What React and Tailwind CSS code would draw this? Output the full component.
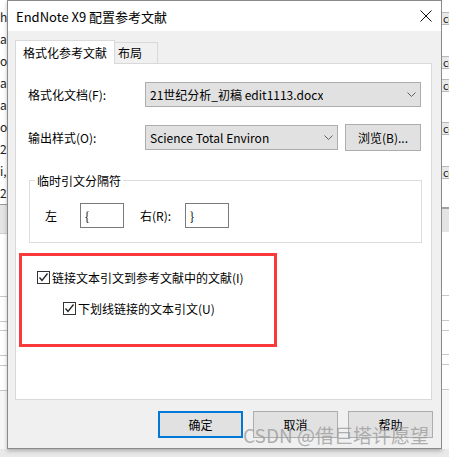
import React from "react";

const font = "font-['Noto_Sans_CJK_SC','Noto_Sans',sans-serif]";

function Chevron() {
  return (
    <svg width="9" height="6" viewBox="0 0 9 6" className="shrink-0">
      <polyline points="0.5,0.5 4.5,4.5 8.5,0.5" fill="none" stroke="#606060" strokeWidth="1" />
    </svg>
  );
}

function Check() {
  return (
    <span className="w-[13px] h-[13px] border border-[#333] bg-white flex items-center justify-center shrink-0">
      <svg width="11" height="11" viewBox="0 0 11 11">
        <polyline points="1.5,5.5 4,8.5 9.5,1.5" fill="none" stroke="#222" strokeWidth="1.3" />
      </svg>
    </span>
  );
}

function Select({ width, children }) {
  return (
    <div className={`${width} h-[25px] bg-[#e1e1e1] border border-[#adadad] flex items-center justify-between pl-[4px] pr-[4px]`}>
      <span className="truncate">{children}</span>
      <Chevron />
    </div>
  );
}

const leftText = ["ha", "al.", "os", "ar", "al.", "os", "23", "i,", "2"];
const rightRows = [12, 56, 79, 122, 166];

function LeftStrip() {
  return (
    <div className="w-[7px] h-full bg-white flex flex-col overflow-hidden text-[12px] leading-[22px] text-[#222]">
      <div className="h-[6px]" />
      {leftText.map((t, i) => (
        <div key={i} className="h-[22px] whitespace-nowrap">{t}</div>
      ))}
      <div className="h-[1px] bg-[#9a9a9a]" />
      <div className="h-[29px] bg-[#e4e4e4] border-b border-[#cfcfcf]" />
      <div className="h-[62px]" />
      <div className="h-[1px] bg-[#c8c8c8]" />
      <div className="h-[24px]" />
      <div className="h-[1px] bg-[#c8c8c8]" />
      <div className="h-[8px]" />
      <div className="h-[1px] bg-[#c8c8c8]" />
      <div className="h-[24px]" />
      <div className="h-[1px] bg-[#c8c8c8]" />
      <div className="h-[9px]" />
      <div className="h-[1px] bg-[#c8c8c8]" />
      <div className="h-[24px]" />
      <div className="h-[1px] bg-[#c8c8c8]" />
      <div className="flex-1 bg-[#f7f7f7]" />
    </div>
  );
}

function RightStrip() {
  const items = [];
  let y = 0;
  rightRows.forEach((top, i) => {
    items.push(<div key={"s" + i} style={{ height: top - y }} />);
    items.push(
      <div key={"c" + i} className="h-[13px] bg-[#e9e9e9] border-y border-[#b9b9b9] text-[11px] leading-[11px] whitespace-nowrap pl-[1px]">
        ce
      </div>
    );
    y = top + 13;
  });
  return (
    <div className="w-[7px] h-full bg-white flex flex-col overflow-hidden text-[#222]">
      {items}
      <div className="h-[28px]" />
      <div className="h-[2px] bg-[#a0a0a0]" />
      <div className="h-[23px] bg-[#e4e4e4]" />
      <div className="h-[63px]" />
      <div className="h-[1px] bg-[#c8c8c8]" />
      <div className="h-[24px]" />
      <div className="h-[1px] bg-[#c8c8c8]" />
      <div className="h-[9px]" />
      <div className="h-[1px] bg-[#c8c8c8]" />
      <div className="h-[23px]" />
      <div className="h-[1px] bg-[#c8c8c8]" />
      <div className="h-[9px]" />
      <div className="h-[1px] bg-[#c8c8c8]" />
      <div className="h-[24px]" />
      <div className="h-[1px] bg-[#c8c8c8]" />
      <div className="flex-1 bg-[#f7f7f7]" />
    </div>
  );
}

export default function App() {
  return (
    <div className={`${font} w-[449px] h-[457px] relative overflow-hidden bg-[#e9e9e9] text-[12px] text-black`}>
      <div className="flex h-[449px]">
        <LeftStrip />

        {/* Dialog */}
        <div className="w-[435px] h-full border border-[#8a8a8a] bg-[#f0f0f0] flex flex-col shadow-[0_2px_4px_rgba(0,0,0,0.25)]">
          <div className="h-[30px] bg-white flex items-center justify-between pl-[8px] pr-[9px]">
            <span className="text-[13px] leading-[18px] pt-[1px]">EndNote X9 配置参考文献</span>
            <svg width="12" height="12" viewBox="0 0 12 12">
              <path d="M0.5 0.5 L11.5 11.5 M11.5 0.5 L0.5 11.5" stroke="#111" strokeWidth="1" />
            </svg>
          </div>

          <div className="flex-1 flex flex-col pt-[9px] pl-[7px] pr-[9px]">
            {/* Tabs */}
            <div className="flex items-end h-[24px] -mb-px relative z-10">
              <div className="w-[100px] h-[24px] bg-white border border-b-0 border-[#d9d9d9] flex items-center pl-[7px] leading-[16px]">
                格式化参考文献
              </div>
              <div className="w-[43px] h-[22px] bg-[#f0f0f0] border border-l-0 border-[#d9d9d9] flex items-center pl-[3px] leading-[16px]">
                布局
              </div>
            </div>

            {/* Panel */}
            <div className="relative w-[417px] h-[337px] bg-white border border-[#d9d9d9] flex flex-col leading-[17px]">
              <div className="flex items-center mt-[18px] pl-[12px]">
                <span className="w-[117px]">格式化文档(F):</span>
                <Select width="w-[276px]">21世纪分析_初稿 edit1113.docx</Select>
              </div>

              <div className="flex items-center mt-[17px] pl-[12px]">
                <span className="w-[117px]">输出样式(O):</span>
                <Select width="w-[193px]">Science Total Environ</Select>
                <div className="ml-[7px] w-[76px] h-[27px] bg-[#e1e1e1] border border-[#adadad] flex items-center justify-center">
                  浏览(B)...
                </div>
              </div>

              <fieldset className="ml-[13px] mt-[21px] w-[393px] border border-[#dcdcdc] pt-[14px] pb-[14px]">
                <legend className="ml-[5px] px-[2px] leading-[17px]">临时引文分隔符</legend>
                <div className="flex items-center pl-[15px]">
                  <span className="w-[35px]">左</span>
                  <div className="w-[44px] h-[25px] border border-[#7a7a7a] bg-white flex items-center pl-[4px]">{"{"}</div>
                  <span className="ml-[16px] w-[45px]">右(R):</span>
                  <div className="w-[44px] h-[25px] border border-[#7a7a7a] bg-white flex items-center pl-[4px]">{"}"}</div>
                </div>
              </fieldset>

              <div className="flex items-center gap-[2px] mt-[26px] ml-[21px]">
                <Check />
                <span>链接文本引文到参考文献中的文献(I)</span>
              </div>
              <div className="flex items-center gap-[2px] mt-[14px] ml-[47px]">
                <Check />
                <span>下划线链接的文本引文(U)</span>
              </div>

              {/* annotation box */}
              <div className="absolute left-[3px] top-[189px] w-[258px] h-[94px] border-[3px] border-[#fa3a3a]" />
            </div>

            {/* Buttons */}
            <div className="flex justify-end gap-[10px] mt-[11px] -mr-[1px]">
              <div className="w-[85px] h-[27px] bg-[#e1e1e1] border-2 border-[#0078d7] flex items-center justify-center">确定</div>
              <div className="w-[85px] h-[27px] bg-[#e1e1e1] border border-[#adadad] flex items-center justify-center">取消</div>
              <div className="w-[85px] h-[27px] bg-[#e1e1e1] border border-[#adadad] flex items-center justify-center">帮助</div>
            </div>
          </div>
        </div>

        <RightStrip />
      </div>

      {/* watermark */}
      <div className="absolute left-[243px] top-[423px] text-[19px] leading-[24px] text-[#9c9c9c]/80 whitespace-nowrap">
        CSDN @借巨塔许愿望
      </div>
    </div>
  );
}
